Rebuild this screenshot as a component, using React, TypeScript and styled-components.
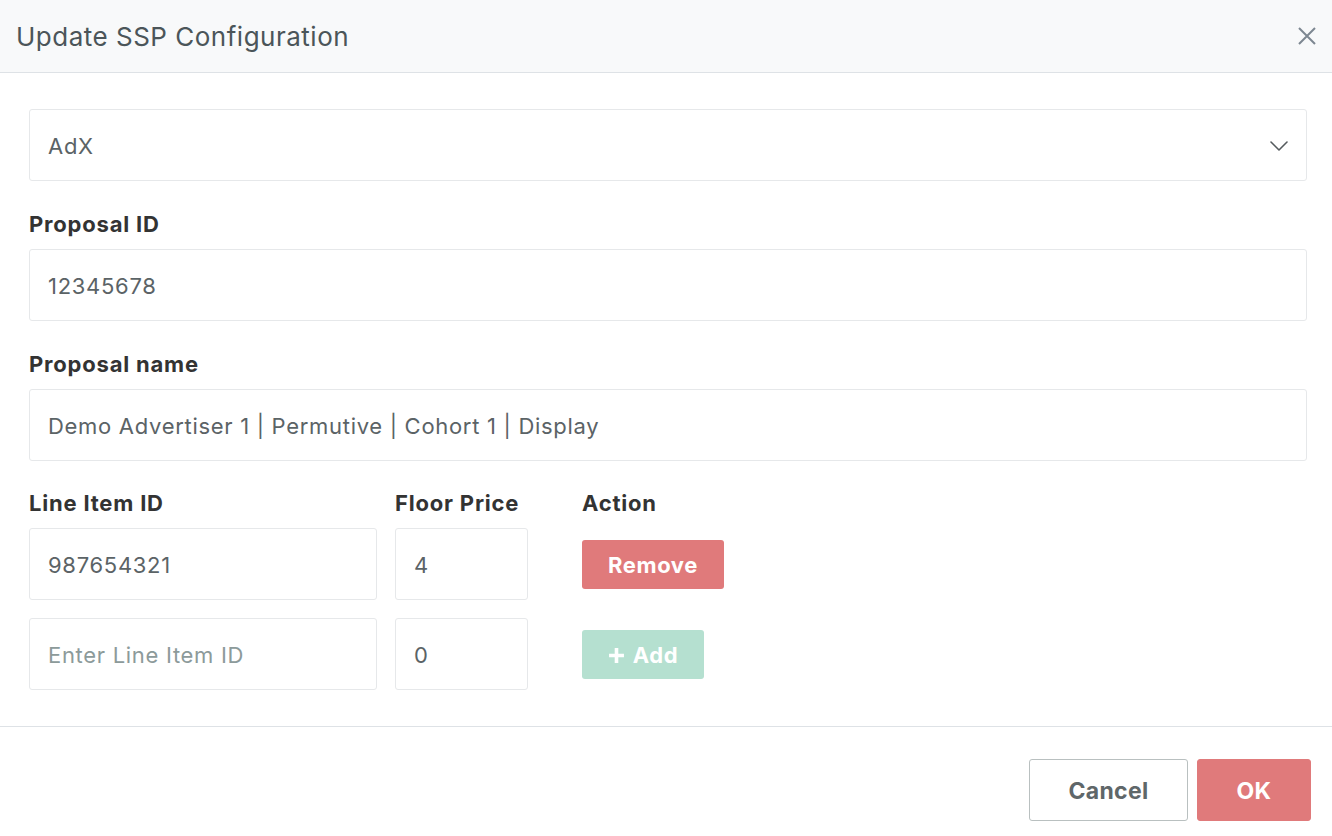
import styled, { createGlobalStyle } from 'styled-components';

const GlobalStyle = createGlobalStyle`
    * {
        box-sizing: border-box;
    }
    body {
        margin: 0;
        background: #ffffff;
        font-family: 'Inter', 'Noto Sans', sans-serif;
    }
`;

const Modal = styled.div`
    width: 1332px;
    height: 836px;
    display: flex;
    flex-direction: column;
    background: #ffffff;
`;

const Header = styled.header`
    flex-shrink: 0;
    height: 73px;
    display: flex;
    align-items: center;
    justify-content: space-between;
    padding: 0 14px 0 16px;
    background: #f8f9fa;
    border-bottom: 1px solid #dee2e6;
`;

const Title = styled.h2`
    margin: 0;
    padding-top: 1px;
    font-size: 26px;
    font-weight: 400;
    color: #4b5559;
    letter-spacing: 0.5px;
`;

const CloseButton = styled.button`
    border: none;
    background: none;
    padding: 0;
    width: 22px;
    height: 22px;
    display: flex;
    align-items: center;
    justify-content: center;
    cursor: pointer;
`;

const Body = styled.div`
    flex-shrink: 0;
    padding: 36px 25px 0 29px;
    display: flex;
    flex-direction: column;
`;

const Field = styled.div`
    display: flex;
    flex-direction: column;
    margin-bottom: 28px;
`;

const Label = styled.label`
    font-size: 22px;
    font-weight: 700;
    color: #333333;
    line-height: 26px;
    letter-spacing: 0.8px;
    padding-top: 2px;
    margin-bottom: 12px;
`;

const Box = styled.div`
    height: 72px;
    width: 100%;
    border: 1px solid #e6e8ea;
    border-radius: 3px;
    display: flex;
    align-items: center;
    justify-content: space-between;
    padding: 2px 18px 0 18px;
    background: #ffffff;
`;

const Value = styled.span<{ $placeholder?: boolean }>`
    font-size: 22px;
    letter-spacing: 0.7px;
    color: ${(props) => (props.$placeholder ? '#8c9a9a' : '#5b6366')};
`;

const Grid = styled.div`
    display: grid;
    grid-template-columns: 348px 133px auto;
    column-gap: 18px;
    row-gap: 18px;
    align-items: center;
`;

const GridLabel = styled(Label)<{ $offset?: number }>`
    padding-top: 1px;
    margin-bottom: -6px;
    margin-left: ${(props) => props.$offset || 0}px;
`;

const ActionButton = styled.button<{ $bg: string; $width: number }>`
    margin-left: 36px;
    width: ${(props) => props.$width}px;
    height: 49px;
    border: none;
    border-radius: 3px;
    background: ${(props) => props.$bg};
    color: #ffffff;
    font-family: inherit;
    font-size: 22px;
    font-weight: 700;
    letter-spacing: 0.6px;
    padding-top: 3px;
    display: flex;
    align-items: center;
    justify-content: center;
    gap: 8px;
    cursor: pointer;
`;

const Footer = styled.footer`
    flex-shrink: 0;
    margin-top: auto;
    border-top: 1px solid #dee2e6;
    height: 110px;
    display: flex;
    justify-content: flex-end;
    align-items: flex-start;
    gap: 9px;
    padding: 32px 21px 0 0;
`;

const FooterButton = styled.button<{ $primary?: boolean; $width: number }>`
    width: ${(props) => props.$width}px;
    height: 62px;
    border-radius: 3px;
    border: 1px solid ${(props) => (props.$primary ? '#e07a7b' : '#b9c0c0')};
    background: ${(props) => (props.$primary ? '#e07a7b' : '#ffffff')};
    color: ${(props) => (props.$primary ? '#ffffff' : '#5f6769')};
    font-family: inherit;
    font-size: 23px;
    font-weight: 700;
    letter-spacing: 0.3px;
    padding-top: 3px;
    cursor: pointer;
`;

function Chevron() {
    return (
        <svg width="18" height="10" viewBox="0 0 18 10" fill="none">
            <path d="M1 1l8 8 8-8" stroke="#555b5e" strokeWidth="1.6" strokeLinecap="round" strokeLinejoin="round" />
        </svg>
    );
}

function CloseIcon() {
    return (
        <svg width="18" height="18" viewBox="0 0 18 18" fill="none">
            <path d="M1 1l16 16M17 1L1 17" stroke="#7d8791" strokeWidth="2" />
        </svg>
    );
}

function PlusIcon() {
    return (
        <svg width="17" height="17" viewBox="0 0 16 16" fill="none">
            <path d="M8 1v14M1 8h14" stroke="#ffffff" strokeWidth="3.4" />
        </svg>
    );
}

function App() {
    return (
        <>
            <GlobalStyle />
            <Modal>
                <Header>
                    <Title>Update SSP Configuration</Title>
                    <CloseButton aria-label="Close">
                        <CloseIcon />
                    </CloseButton>
                </Header>
                <Body>
                    <Field>
                        <Box>
                            <Value>AdX</Value>
                            <Chevron />
                        </Box>
                    </Field>
                    <Field>
                        <Label>Proposal ID</Label>
                        <Box>
                            <Value>12345678</Value>
                        </Box>
                    </Field>
                    <Field>
                        <Label>Proposal name</Label>
                        <Box>
                            <Value>Demo Advertiser 1 | Permutive | Cohort 1 | Display</Value>
                        </Box>
                    </Field>
                    <Grid>
                        <GridLabel>Line Item ID</GridLabel>
                        <GridLabel>Floor Price</GridLabel>
                        <GridLabel $offset={36}>Action</GridLabel>

                        <Box>
                            <Value>987654321</Value>
                        </Box>
                        <Box>
                            <Value>4</Value>
                        </Box>
                        <div>
                            <ActionButton $bg="#e07a7b" $width={142}>
                                Remove
                            </ActionButton>
                        </div>

                        <Box>
                            <Value $placeholder>Enter Line Item ID</Value>
                        </Box>
                        <Box>
                            <Value>0</Value>
                        </Box>
                        <div>
                            <ActionButton $bg="#b5e0d0" $width={122}>
                                <PlusIcon />
                                Add
                            </ActionButton>
                        </div>
                    </Grid>
                </Body>
                <Footer>
                    <FooterButton $width={159}>Cancel</FooterButton>
                    <FooterButton $primary $width={114}>
                        OK
                    </FooterButton>
                </Footer>
            </Modal>
        </>
    );
}

export default App;
